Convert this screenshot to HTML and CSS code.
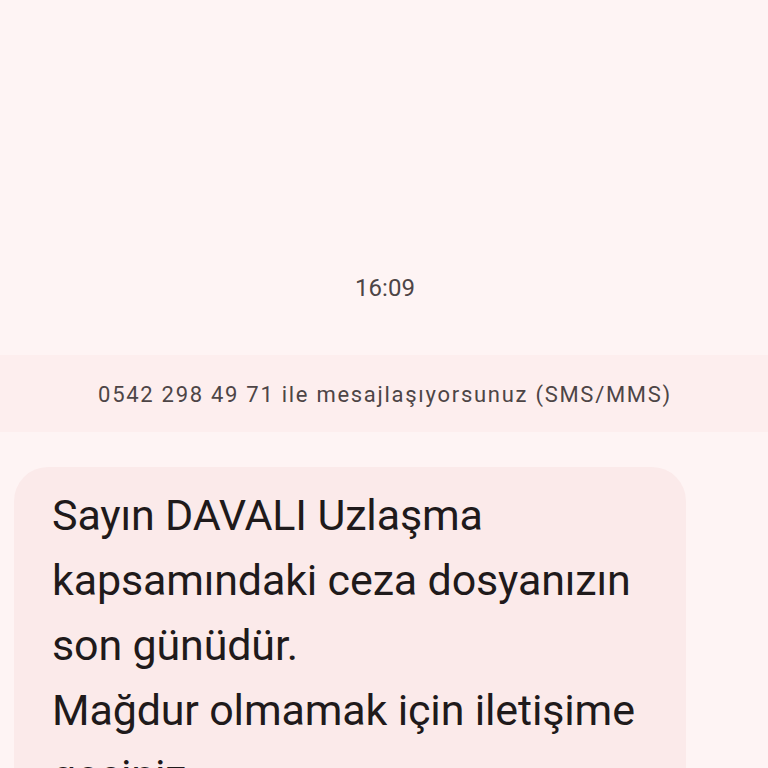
FILE: index.html
```html
<!DOCTYPE html>
<html lang="tr">
<head>
<meta charset="utf-8">
<link rel="stylesheet" href="styles.css">
</head>
<body>
<div class="screen">
  <div class="time">16:09</div>
  <div class="band">0542 298 49 71 ile mesajlaşıyorsunuz (SMS/MMS)</div>
  <div class="bubble">
    <p class="msg">Sayın DAVALI Uzlaşma<br>kapsamındaki ceza dosyanızın<br>son günüdür.<br>Mağdur olmamak için iletişime<br>geçiniz.</p>
  </div>
</div>
</body>
</html>
```
FILE: styles.css
```css
html, body {
  margin: 0;
  padding: 0;
  background: #fef4f4;
}
.screen {
  width: 768px;
  height: 768px;
  overflow: hidden;
  font-family: Roboto, "Noto Sans", sans-serif;
  display: flex;
  flex-direction: column;
}
.time {
  margin-top: 272px;
  height: 32px;
  line-height: 32px;
  text-align: center;
  font-size: 24px;
  color: #4d4546;
  padding-left: 2px;
}
.band {
  margin-top: 51px;
  height: 77px;
  line-height: 79px;
  background: #fdeeee;
  text-align: center;
  font-size: 22px;
  letter-spacing: 1.72px;
  color: #4d4546;
  padding-left: 2px;
}
.bubble {
  margin: 35px 0 0 14px;
  width: 634px;
  padding: 16px 0 40px 38px;
  background: #fbeaea;
  border-radius: 34px;
}
.msg {
  margin: 0;
  font-size: 43px;
  line-height: 65px;
  letter-spacing: -0.15px;
  color: #1f1a1b;
}
```
